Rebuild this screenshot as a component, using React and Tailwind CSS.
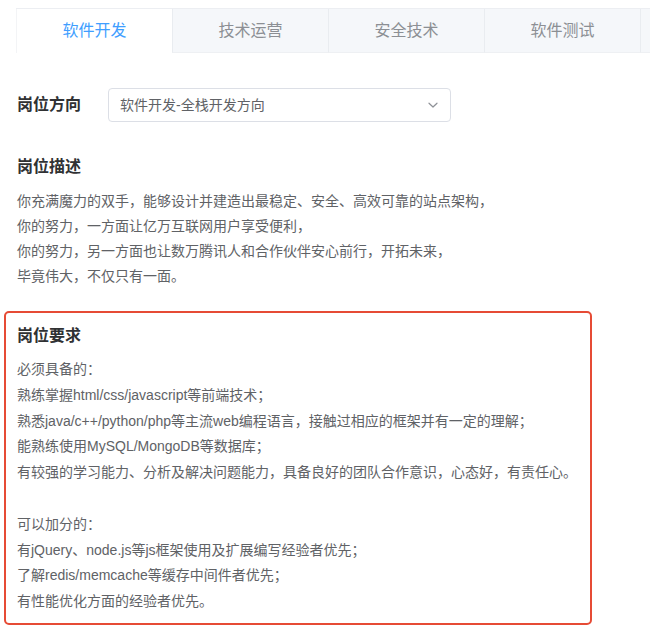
import React from "react";

const tabs = ["软件开发", "技术运营", "安全技术", "软件测试", ""];

const desc = [
  "你充满魔力的双手，能够设计并建造出最稳定、安全、高效可靠的站点架构，",
  "你的努力，一方面让亿万互联网用户享受便利，",
  "你的努力，另一方面也让数万腾讯人和合作伙伴安心前行，开拓未来，",
  "毕竟伟大，不仅只有一面。",
];

const req = [
  "必须具备的：",
  "熟练掌握html/css/javascript等前端技术；",
  "熟悉java/c++/python/php等主流web编程语言，接触过相应的框架并有一定的理解；",
  "能熟练使用MySQL/MongoDB等数据库；",
  "有较强的学习能力、分析及解决问题能力，具备良好的团队合作意识，心态好，有责任心。",
  "",
  "可以加分的：",
  "有jQuery、node.js等js框架使用及扩展编写经验者优先；",
  "了解redis/memcache等缓存中间件者优先；",
  "有性能优化方面的经验者优先。",
];

export default function App() {
  return (
    <div className="w-[650px] h-[632px] overflow-hidden bg-white font-['Liberation_Sans','Noto_Sans_CJK_SC',sans-serif] px-[4px] pt-[8px]">
      {/* Tabs */}
      <div className="ml-[12px] flex h-[45px] border-t border-[#eceef2] overflow-hidden w-[640px]">
        {tabs.map((t, i) => (
          <div
            key={i}
            className={
              "shrink-0 w-[156px] flex items-center justify-center text-[16px] " +
              (i === 0
                ? "bg-white text-[#409eff] border-l border-[#f3f4f6]"
                : "bg-[#f5f7fa] text-[#8c8f94] border-l border-[#e9ecf0] border-b border-b-[#eef0f3]")
            }
          >
            {t}
          </div>
        ))}
      </div>

      {/* Direction */}
      <div className="mt-[35px] px-[13px] flex items-center h-[34px]">
        <div className="w-[91px] text-[16px] font-bold text-[#303133]">岗位方向</div>
        <div className="w-[343px] h-[34px] border border-[#dcdfe6] rounded-[4px] flex items-center justify-between pl-[11px] pr-[10px]">
          <span className="text-[14px] text-[#606266]">软件开发-全栈开发方向</span>
          <svg width="12" height="12" viewBox="0 0 12 12" fill="none" className="mr-[1px]">
            <path d="M2 4.2 L6 8 L10 4.2" stroke="#8e9197" strokeWidth="1.2" strokeLinecap="round" strokeLinejoin="round" />
          </svg>
        </div>
      </div>

      {/* Description */}
      <div className="mt-[33px] px-[13px]">
        <div className="text-[16px] leading-[24px] font-bold text-[#303133]">岗位描述</div>
        <div className="mt-[10px] text-[14px] leading-[25px] text-[#606266]">
          {desc.map((l, i) => (
            <div key={i}>{l}</div>
          ))}
        </div>
      </div>

      {/* Requirements */}
      <div className="mt-[22px] w-[588px] h-[314px] border-2 border-[#e64b35] rounded-[5px] pl-[11px] pt-[11px]">
        <div className="text-[16px] leading-[24px] font-bold text-[#303133]">岗位要求</div>
        <div className="mt-[9px] text-[14px] leading-[25.8px] text-[#606266]">
          {req.map((l, i) => (
            <div key={i} className="h-[25.8px]">{l}</div>
          ))}
        </div>
      </div>
    </div>
  );
}
